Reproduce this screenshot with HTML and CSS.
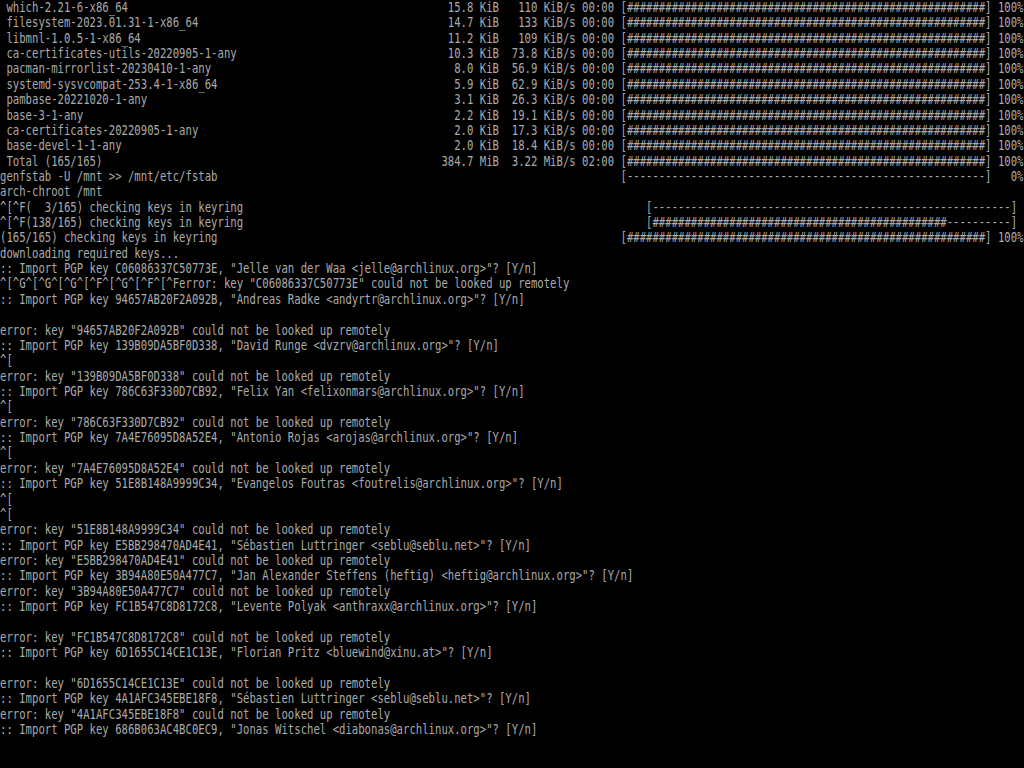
FILE: index.html
```html
<!DOCTYPE html>
<html lang="en">
<head>
    <meta charset="UTF-8">
    <meta name="viewport" content="width=device-width, initial-scale=1.0">
    <title>tty1</title>
    <link rel="stylesheet" href="styles.css">
</head>
<body>
<pre class="console"> which-2.21-6-x86_64                                                  15.8 KiB   110 KiB/s 00:00 [########################################################] 100%
 filesystem-2023.01.31-1-x86_64                                       14.7 KiB   133 KiB/s 00:00 [########################################################] 100%
 libmnl-1.0.5-1-x86_64                                                11.2 KiB   109 KiB/s 00:00 [########################################################] 100%
 ca-certificates-utils-20220905-1-any                                 10.3 KiB  73.8 KiB/s 00:00 [########################################################] 100%
 pacman-mirrorlist-20230410-1-any                                      8.0 KiB  56.9 KiB/s 00:00 [########################################################] 100%
 systemd-sysvcompat-253.4-1-x86_64                                     5.9 KiB  62.9 KiB/s 00:00 [########################################################] 100%
 pambase-20221020-1-any                                                3.1 KiB  26.3 KiB/s 00:00 [########################################################] 100%
 base-3-1-any                                                          2.2 KiB  19.1 KiB/s 00:00 [########################################################] 100%
 ca-certificates-20220905-1-any                                        2.0 KiB  17.3 KiB/s 00:00 [########################################################] 100%
 base-devel-1-1-any                                                    2.0 KiB  18.4 KiB/s 00:00 [########################################################] 100%
 Total (165/165)                                                     384.7 MiB  3.22 MiB/s 02:00 [########################################################] 100%
genfstab -U /mnt &gt;&gt; /mnt/etc/fstab                                                               [--------------------------------------------------------]   0%
arch-chroot /mnt
^[^F(  3/165) checking keys in keyring                                                               [--------------------------------------------------------]
^[^F(138/165) checking keys in keyring                                                               [##############################################----------]
(165/165) checking keys in keyring                                                               [########################################################] 100%
downloading required keys...
:: Import PGP key C06086337C50773E, "Jelle van der Waa &lt;jelle@archlinux.org&gt;"? [Y/n]
^[^G^[^G^[^G^[^F^[^G^[^F^[^Ferror: key "C06086337C50773E" could not be looked up remotely
:: Import PGP key 94657AB20F2A092B, "Andreas Radke &lt;andyrtr@archlinux.org&gt;"? [Y/n]

error: key "94657AB20F2A092B" could not be looked up remotely
:: Import PGP key 139B09DA5BF0D338, "David Runge &lt;dvzrv@archlinux.org&gt;"? [Y/n]
^[
error: key "139B09DA5BF0D338" could not be looked up remotely
:: Import PGP key 786C63F330D7CB92, "Felix Yan &lt;felixonmars@archlinux.org&gt;"? [Y/n]
^[
error: key "786C63F330D7CB92" could not be looked up remotely
:: Import PGP key 7A4E76095D8A52E4, "Antonio Rojas &lt;arojas@archlinux.org&gt;"? [Y/n]
^[
error: key "7A4E76095D8A52E4" could not be looked up remotely
:: Import PGP key 51E8B148A9999C34, "Evangelos Foutras &lt;foutrelis@archlinux.org&gt;"? [Y/n]
^[
^[
error: key "51E8B148A9999C34" could not be looked up remotely
:: Import PGP key E5BB298470AD4E41, "Sébastien Luttringer &lt;seblu@seblu.net&gt;"? [Y/n]
error: key "E5BB298470AD4E41" could not be looked up remotely
:: Import PGP key 3B94A80E50A477C7, "Jan Alexander Steffens (heftig) &lt;heftig@archlinux.org&gt;"? [Y/n]
error: key "3B94A80E50A477C7" could not be looked up remotely
:: Import PGP key FC1B547C8D8172C8, "Levente Polyak &lt;anthraxx@archlinux.org&gt;"? [Y/n]

error: key "FC1B547C8D8172C8" could not be looked up remotely
:: Import PGP key 6D1655C14CE1C13E, "Florian Pritz &lt;bluewind@xinu.at&gt;"? [Y/n]

error: key "6D1655C14CE1C13E" could not be looked up remotely
:: Import PGP key 4A1AFC345EBE18F8, "Sébastien Luttringer &lt;seblu@seblu.net&gt;"? [Y/n]
error: key "4A1AFC345EBE18F8" could not be looked up remotely
:: Import PGP key 686B063AC4BC0EC9, "Jonas Witschel &lt;diabonas@archlinux.org&gt;"? [Y/n]
</pre>
</body>
</html>
```

FILE: styles.css
```css
html, body {
    margin: 0;
    padding: 0;
    height: 100%;
    background-color: #000;
    overflow: hidden;
}
/* 160x50 text console squeezed into 1024x768: cells are 6.4 x 15.36 */
.console {
    margin: 0;
    padding: 0;
    font-family: 'DejaVu Sans Mono', 'Liberation Mono', monospace;
    font-size: 13.29px;
    line-height: 15.36px;
    color: #aaaaaa;
    white-space: pre;
    transform: scaleX(0.8);
    transform-origin: 0 0;
}
```
